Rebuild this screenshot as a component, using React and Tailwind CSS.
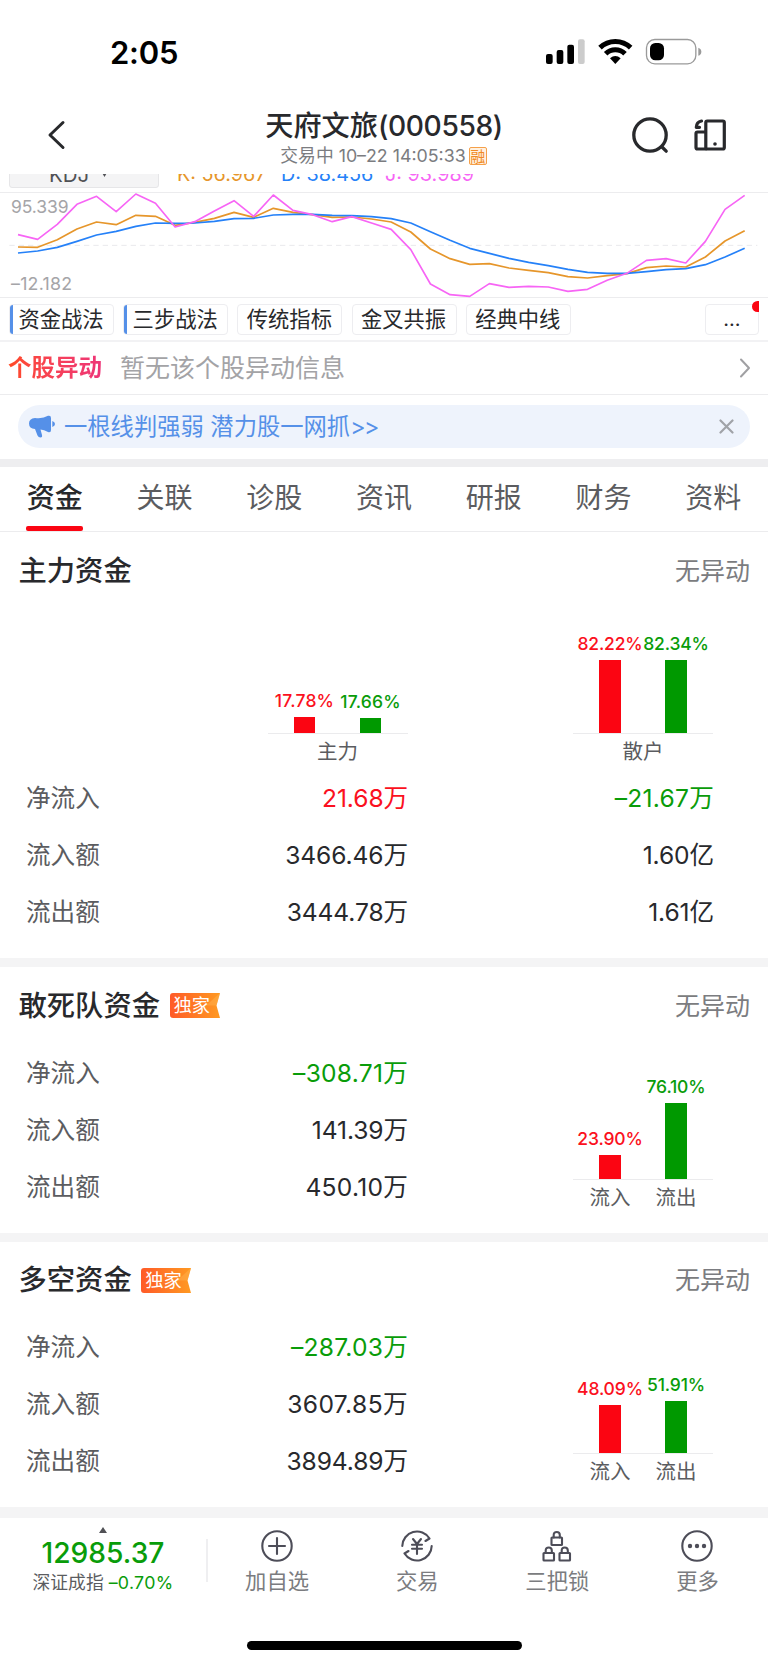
const START = 54;
const STEP = 58.92;
const J = [223,237,192,132,108,154,101,129,200,184,152,121,168,104,150,163,184,169,188,207,268,371,403,408,370,381,378,380,393,387,360,339,300,295,308,243,147,105];
const K = [260,261,238,206,185,193,165,168,195,186,174,156,171,144,156,163,171,170,176,185,215,266,295,312,310,323,330,337,349,353,346,340,322,317,320,290,242,211];
const D = [278,272,261,243,224,213,198,188,189,188,183,175,174,164,162,162,165,166,169,175,188,214,240,264,279,294,306,316,327,336,339,339,334,328,325,313,290,264];
const line = (ys) => ys.map((y, i) => `${(START + i * STEP).toFixed(1)},${y}`).join(' ');

function StatusBar() {
  return (
    <div className="flex h-[104px] items-start justify-between pl-[110px] pr-[64.500px] pt-[36px]">
      <span className="text-[31px] font-semibold leading-[34px] tracking-[-0.2px] text-black">2:05</span>
      <svg className="h-[30px] w-[160px]" viewBox="70 48 480 90">
        <rect x="76" y="102" width="20" height="30" rx="6" />
        <rect x="108" y="90" width="20" height="42" rx="6" />
        <rect x="140" y="74" width="20" height="58" rx="6" />
        <rect x="172" y="58" width="20" height="74" rx="6" fill="#cccccc" />
        <g fill="none" stroke="#000" strokeWidth="15">
          <path d="M238 83 A66 66 0 0 1 330 83" />
          <path d="M255 101 A41 41 0 0 1 313 101" />
        </g>
        <path d="M268 115 Q284 101 300 115 L284 132 Z" />
        <rect x="377.500" y="58.500" width="148" height="73" rx="25" fill="none" stroke="#9a9a9a" strokeWidth="4" />
        <rect x="388" y="69" width="42" height="52" rx="16" />
        <path d="M533 83 Q542 86 542 95 Q542 104 533 107 Z" fill="#9a9a9a" />
      </svg>
    </div>
  );
}

function Header() {
  return (
    <header className="flex h-[70px] items-start justify-between bg-white pl-[47px] pr-[41px]">
      <svg className="mt-[16px] h-[30px] w-[20px]" viewBox="0 0 20 30" fill="none" stroke="#28292c" strokeWidth="3" strokeLinecap="round" strokeLinejoin="round">
        <path d="M16 2.500 L3 15 L16 27.500" />
      </svg>
      <div className="ml-[70px] flex flex-col items-center pt-[5px]">
        <h1 className="whitespace-nowrap text-[28.200px] font-medium leading-[34px] text-[#28292c]">
          天府文旅<span className="tracking-[-0.4px]">(000558)</span>
        </h1>
        <div className="flex items-center whitespace-nowrap pr-[1px] text-[17.800px] leading-[26px] text-[#7b7c80]">
          交易中&nbsp;<span>10–22 14:05:33</span>
          <span className="ml-[3px] flex h-[18px] w-[18px] items-center justify-center rounded-[2px] border border-[#f5a04a] bg-[#fff1e0] text-[15px] leading-none text-[#f08a25]">融</span>
        </div>
      </div>
      <div className="flex items-center gap-[24px] pt-[12px]">
        <svg className="h-[38px] w-[38px]" viewBox="0 0 38 38" fill="none" stroke="#28292c" strokeWidth="3.300" strokeLinecap="round">
          <circle cx="19" cy="19" r="16.200" />
          <path d="M31 31 L35.200 35.200" />
        </svg>
        <svg className="h-[34px] w-[34px]" viewBox="0 0 34 34" fill="none" stroke="#28292c" strokeWidth="3.200" strokeLinejoin="round" strokeLinecap="round">
          <rect x="12.800" y="3" width="18.500" height="28" rx="1.500" />
          <path d="M12.500 14 H4.500 Q3 14 3 15.500 V29.500 Q3 31 4.500 31 H12.500" />
          <path d="M8.500 3 Q3.500 4 3.300 9.300 H6.500" />
          <circle cx="22" cy="26" r="1.800" fill="#28292c" stroke="none" />
        </svg>
      </div>
    </header>
  );
}

function Indicator() {
  return (
    <section>
      <div className="h-[19px] overflow-hidden border-b border-[#ececee]">
        <div className="mt-[-14px] flex h-[28px] items-center whitespace-nowrap text-[19.800px]">
          <div className="ml-[9px] flex h-[28px] w-[150px] items-center gap-[12px] rounded-[3px] border border-[#e6e6e8] bg-[#f4f4f5] pl-[39px] text-[#505155]">
            <span className="pt-[2px] text-[20.500px]">KDJ</span>
            <svg className="h-[6px] w-[7px]" viewBox="0 0 7 6"><path d="M0 0 H7 L3.500 6 Z" fill="#505155" /></svg>
          </div>
          <span className="ml-[18px] w-[104px] pt-[2px] text-[#e6962b]">K: 56.967</span>
          <span className="w-[104px] pt-[2px] text-[#2581f8]">D: 38.456</span>
          <span className="pt-[2px] text-[#f765f5]">J: 93.989</span>
        </div>
      </div>
      <div className="relative flex h-[105px] flex-col justify-between border-b border-[#ececee] pt-[1px]">
        <span className="pl-[11px] text-[17.500px] leading-[26px] tracking-[-0.1px] text-[#a5a5a8]">95.339</span>
        <span className="pl-[11px] text-[17.800px] leading-[26px] tracking-[0.250px] text-[#a5a5a8]">–12.182</span>
        <svg className="absolute inset-0 h-[105px] w-[768px]" viewBox="0 98 2304 315" fill="none" strokeWidth="5" strokeLinejoin="round">
          <path d="M28 255 H2272" stroke="#e9e9ec" strokeWidth="3" strokeDasharray="16 12" />
          <polyline points={line(K)} stroke="#e6962b" />
          <polyline points={line(D)} stroke="#2581f8" />
          <polyline points={line(J)} stroke="#f765f5" />
        </svg>
      </div>
    </section>
  );
}

function Strategies() {
  const tags = [['资金战法', true], ['三步战法', true], ['传统指标', false], ['金叉共振', false], ['经典中线', false]];
  return (
    <div className="flex h-[44px] items-center border-b-2 border-[#f2f2f4] pl-[9px] pr-[9px]">
      <div className="flex gap-[9.200px]">
        {tags.map(([name, marked]) => (
          <div key={name} className="relative flex h-[31px] w-[105px] items-center justify-center overflow-hidden rounded-[4px] border border-[#ededf0] pr-[1px] text-[21.300px] leading-[29px] text-[#28292c]">
            {marked && <span className="absolute bottom-0 left-0 top-0 w-[3px] bg-[#5590e8]" />}
            {name}
          </div>
        ))}
      </div>
      <div className="relative ml-auto flex h-[31px] w-[54px] items-center justify-center rounded-[4px] border border-[#ededf0] text-[20px] text-[#28292c]">
        ...
        <span className="absolute right-[-1px] top-[-4px] h-[11px] w-[7px] rounded-l-full bg-[#fb0512]" />
      </div>
    </div>
  );
}

function Notices() {
  return (
    <section>
      <div className="flex h-[53px] items-center border-b border-[#ececee] pl-[8px] pr-[17px]">
        <span className="bg-gradient-to-r from-[#ff4a22] to-[#ee3478] bg-clip-text text-[23.500px] font-bold leading-[34px] text-transparent">个股异动</span>
        <span className="ml-[18px] text-[25px] leading-[34px] text-[#a3a3a6]">暂无该个股异动信息</span>
        <svg className="ml-auto h-[20px] w-[12px]" viewBox="0 0 12 20" fill="none" stroke="#a0a0a3" strokeWidth="2" strokeLinecap="round" strokeLinejoin="round"><path d="M2 1.500 L10 10 L2 18.500" /></svg>
      </div>
      <div className="px-[18px] pb-[11px] pt-[10px]">
        <div className="flex h-[43px] items-center rounded-full bg-[#eef3fc] pl-[11px] pr-[16px]">
          <svg className="h-[23px] w-[26px]" viewBox="0 0 26 23" fill="#5590e8">
            <path d="M6 3 Q14 4 19 .8 Q22 0 22 3 V15 Q22 18 19 17 Q15 14.500 11.500 14.500 L13 20 Q13.500 22.500 11.500 22.500 Q9.500 22.500 8.500 20.500 L6 14 Q0 13.500 0 8.500 Q0 3.500 6 3 Z" />
            <path d="M23.300 6 Q26 7 26 9 Q26 11 23.300 12 Z" />
          </svg>
          <span className="ml-[9px] text-[23.300px] leading-[34px] text-[#5590e8]">一根线判强弱 潜力股一网抓<span className="tracking-[-1.600px]">&gt;&gt;</span></span>
          <svg className="ml-auto h-[15px] w-[15px]" viewBox="0 0 15 15" stroke="#a0a3a8" strokeWidth="2.200" strokeLinecap="round"><path d="M1.500 1.500 L13.500 13.500 M13.500 1.500 L1.500 13.500" /></svg>
        </div>
      </div>
    </section>
  );
}

function Tabs() {
  const rest = ['关联', '诊股', '资讯', '研报', '财务', '资料'];
  return (
    <nav className="flex h-[65px] border-b border-[#ececee] text-[28px] leading-[36px] text-[#5b5c60]">
      <div className="flex flex-1 flex-col items-center justify-between pt-[13px] font-medium text-[#28292c]">
        资金
        <span className="h-[5px] w-[57px] rounded-[2px] bg-[#fb0512]" />
      </div>
      {rest.map((t) => <div key={t} className="flex-1 pt-[13px] text-center">{t}</div>)}
    </nav>
  );
}

function Bar({ pct, height, green }) {
  return (
    <div className="flex w-[66px] flex-col items-center">
      <span className={`whitespace-nowrap text-[17.500px] font-medium leading-[22px] ${pct.startsWith('17') ? 'tracking-[0.2px]' : 'tracking-[-0.15px]'} ${green ? 'text-[#099c09]' : 'text-[#fb1020]'}`}>{pct}</span>
      <span className={`mt-[5px] w-[21.500px] ${green ? 'bg-[#009900]' : 'bg-[#fb0512]'}`} style={{ height }} />
    </div>
  );
}

function BarChart({ bars, labels }) {
  return (
    <div className="w-[140px]">
      <div className="flex h-[105px] items-end justify-center border-b border-[#ebebed]">
        {bars.map(([pct, height], i) => <Bar key={pct} pct={pct} height={height} green={i === 1} />)}
      </div>
      <div className="flex justify-center pt-[3px] text-[20.500px] leading-[30px] text-[#5b5c60]">
        {labels.map((l) => <span key={l} className="w-[66px] text-center">{l}</span>)}
      </div>
    </div>
  );
}

function SectionTitle({ title, exclusive }) {
  return (
    <div className="flex h-[40px] items-center pl-[18.500px] pr-[18px]">
      <h2 className="text-[28.300px] font-medium leading-[40px] text-[#28292c]">{title}</h2>
      {exclusive && (
        <div className="relative ml-[9.500px] flex h-[25px] w-[50px] items-center pl-[4px] text-[18.300px] leading-[25px] text-white">
          <svg className="absolute inset-0 h-[25px] w-[50px]" viewBox="0 0 50 25">
            <defs>
              <linearGradient id="ribbon"><stop offset="0" stopColor="#ff5a28" /><stop offset="1" stopColor="#ff9a22" /></linearGradient>
            </defs>
            <path d="M3 0 H50 L46.500 12.500 L50 25 H3 Q0 25 0 22 V3 Q0 0 3 0 Z" fill="url(#ribbon)" />
            <path d="M50 0 L36 12.500 L46.500 12.500 Z" fill="#ffb14d" opacity=".5" />
          </svg>
          <span className="relative">独家</span>
        </div>
      )}
      <span className="ml-auto text-[25px] leading-[40px] text-[#7b7c80]">无异动</span>
    </div>
  );
}

function tone(v) {
  if (v.startsWith('–')) return 'text-[#099c09]';
  return v === '21.68万' ? 'text-[#fb1020]' : 'text-[#28292c]';
}

function spacing(v) {
  if (v === '3607.85万') return 'tracking-[0.4px]';
  if (v.startsWith('–') || v === '450.10万') return 'tracking-[0.25px]';
  return 'tracking-[-0.1px]';
}

function Row({ label, values }) {
  return (
    <div className="flex h-[57.200px] items-center pl-[26px] text-[24.600px] leading-[34px]">
      <span className="w-[130px] text-[#5b5c60]">{label}</span>
      {values.map((v, i) => (
        <span key={i} className={`${i ? 'w-[306px]' : 'w-[252px]'} text-right ${tone(v)} ${spacing(v)}`}>{v}</span>
      ))}
    </div>
  );
}

function FlowSection({ title, values, bars }) {
  const names = ['净流入', '流入额', '流出额'];
  return (
    <section className="h-[274.500px] border-b-[9px] border-[#f4f4f5]">
      <div className="pt-[18.500px]"><SectionTitle title={title} exclusive /></div>
      <div className="flex pt-[18.500px]">
        <div className="w-[573px]">
          {names.map((n, i) => <Row key={n} label={n} values={[values[i]]} />)}
        </div>
        <div className="pt-[30.500px]"><BarChart bars={bars} labels={['流入', '流出']} /></div>
      </div>
    </section>
  );
}

function Lock({ x, y }) {
  return (
    <g transform={`translate(${x} ${y})`}>
      <rect x="1" y="6.500" width="10.500" height="7.500" rx=".6" />
      <path d="M3.200 6.500 V4 Q3.200 1 6.250 1 Q9.300 1 9.300 4 V6.500" />
    </g>
  );
}

function BottomNav() {
  const items = [
    ['加自选', <><circle cx="16" cy="16" r="14.700" /><path d="M16 8 V24 M8 16 H24" /></>],
    ['交易', <>
      <path d="M1.300 16 A14.700 14.700 0 0 1 28.500 8.500 L24.500 11" />
      <path d="M30.700 16 A14.700 14.700 0 0 1 3.500 23.500 L7.500 21" />
      <path d="M12 9 L16 14 L20 9 M11 14.800 H21 M11 18.800 H21 M16 14 V24" />
    </>],
    ['三把锁', <><Lock x={9.500} y={1} /><Lock x={1.500} y={16.500} /><Lock x={17.500} y={16.500} /></>],
    ['更多', <><circle cx="16" cy="16" r="14.700" /><g fill="#4d4d58" stroke="none"><circle cx="9" cy="16" r="2.200" /><circle cx="16" cy="16" r="2.200" /><circle cx="23" cy="16" r="2.200" /></g></>],
  ];
  return (
    <footer className="flex flex-col items-center">
      <div className="flex h-[123px] w-full items-start">
        <div className="flex w-[206px] flex-col items-center pt-[9px]">
          <svg className="h-[6px] w-[8px] shrink-0" viewBox="0 0 8 6"><path d="M4 0 L8 6 H0 Z" fill="#505155" /></svg>
          <span className="mt-[4px] text-[28.200px] font-medium leading-[32px] text-[#099c09]">12985.37</span>
          <span className="whitespace-nowrap text-[17.800px] leading-[28px] text-[#5b5c60]">深证成指 <span className="tracking-[0.3px] text-[#099c09]">–0.70%</span></span>
        </div>
        <div className="mt-[21px] h-[43px] w-[1.500px] bg-[#efeff1]" />
        {items.map(([name, art]) => (
          <div key={name} className="flex flex-1 flex-col items-center pr-[1px] pt-[12px]">
            <svg className="h-[32px] w-[32px]" viewBox="0 0 32 32" fill="none" stroke="#4d4d58" strokeWidth="2.100" strokeLinecap="round" strokeLinejoin="round">{art}</svg>
            <span className="mt-[4px] text-[21.300px] leading-[30px] text-[#7b7c80]">{name}</span>
          </div>
        ))}
      </div>
      <div className="h-[9px] w-[275px] shrink-0 rounded-full bg-black" />
    </footer>
  );
}

export default function App() {
  return (
    <div className="h-[1665px] w-[768px] overflow-hidden bg-white font-['Inter','Noto_Sans_CJK_SC',sans-serif]">
      <StatusBar />
      <Header />
      <Indicator />
      <Strategies />
      <Notices />
      <div className="h-[8px] bg-[#eeeef0]" />
      <Tabs />
      <section className="h-[435px] border-b-[9px] border-[#f4f4f5]">
        <div className="pt-[19px]"><SectionTitle title="主力资金" /></div>
        <div className="flex gap-[165.500px] pb-[2px] pl-[267.500px] pt-[38px]">
          <BarChart bars={[['17.78%', 16], ['17.66%', 15.5]]} labels={['主力']} />
          <BarChart bars={[['82.22%', 73.5], ['82.34%', 73.5]]} labels={['散户']} />
        </div>
        <Row label="净流入" values={['21.68万', '–21.67万']} />
        <Row label="流入额" values={['3466.46万', '1.60亿']} />
        <Row label="流出额" values={['3444.78万', '1.61亿']} />
      </section>
      <FlowSection title="敢死队资金" values={['–308.71万', '141.39万', '450.10万']} bars={[['23.90%', 24], ['76.10%', 76]]} />
      <FlowSection title="多空资金" values={['–287.03万', '3607.85万', '3894.89万']} bars={[['48.09%', 48], ['51.91%', 52]]} />
      <div className="h-[1.500px] bg-[#f4f4f5]" />
      <BottomNav />
    </div>
  );
}
